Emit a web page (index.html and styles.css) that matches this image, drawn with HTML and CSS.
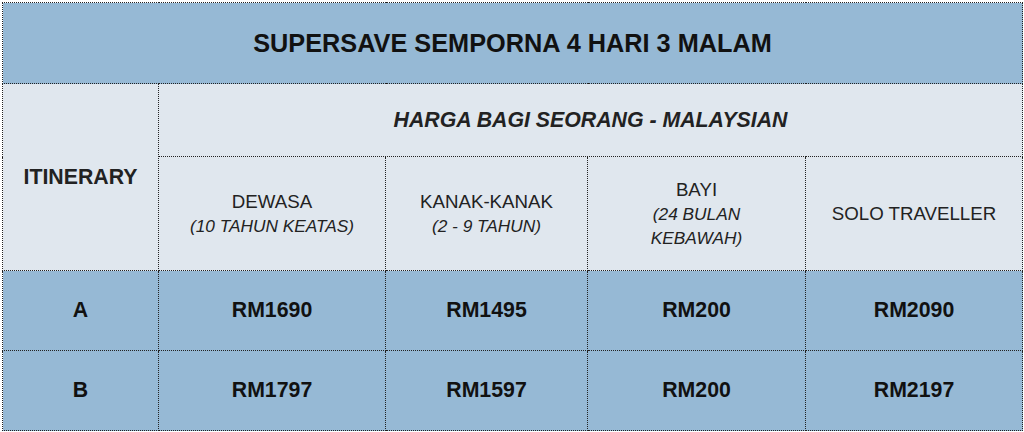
FILE: index.html
```html
<!DOCTYPE html>
<html>
<head>
<meta charset="utf-8">
<link rel="stylesheet" href="styles.css">
</head>
<body>
<table class="price">
  <colgroup>
    <col class="c1"><col class="c2"><col class="c3"><col class="c4"><col class="c5">
  </colgroup>
  <tr class="r-title">
    <td colspan="5" class="title">SUPERSAVE SEMPORNA 4 HARI 3 MALAM</td>
  </tr>
  <tr class="r-sub">
    <td rowspan="2" class="light itin">ITINERARY</td>
    <td colspan="4" class="light harga">HARGA BAGI SEORANG - MALAYSIAN</td>
  </tr>
  <tr class="r-cat">
    <td class="light cat">DEWASA<br><em>(10 TAHUN KEATAS)</em></td>
    <td class="light cat">KANAK-KANAK<br><em>(2 - 9 TAHUN)</em></td>
    <td class="light cat">BAYI<br><em>(24 BULAN<br>KEBAWAH)</em></td>
    <td class="light cat">SOLO TRAVELLER</td>
  </tr>
  <tr class="r-row">
    <td class="val">A</td>
    <td class="val">RM1690</td>
    <td class="val">RM1495</td>
    <td class="val">RM200</td>
    <td class="val">RM2090</td>
  </tr>
  <tr class="r-row">
    <td class="val">B</td>
    <td class="val">RM1797</td>
    <td class="val">RM1597</td>
    <td class="val">RM200</td>
    <td class="val">RM2197</td>
  </tr>
</table>
</body>
</html>
```

FILE: styles.css
```css
html, body {
  margin: 0;
  padding: 0;
  background: #ffffff;
}
body {
  padding: 2px 0 0 2px;
  font-family: "Liberation Sans", Arial, sans-serif;
}
.price {
  border-collapse: collapse;
  table-layout: fixed;
  width: 1020px;
}
.c1 { width: 156px; }
.c2 { width: 227px; }
.c3 { width: 202px; }
.c4 { width: 218px; }
.c5 { width: 217px; }
.price td {
  border: 1px dotted #222;
  text-align: center;
  vertical-align: middle;
  padding: 0 4px;
  background: #96b9d5;
  color: #111;
}
.price td.light {
  background: #e0e7ee;
  color: #222;
}
.r-title { height: 81px; }
.r-sub { height: 73px; }
.r-cat { height: 114px; }
.r-row { height: 80px; }
.title {
  font-size: 25.3px;
  font-weight: bold;
  color: #111;
}
.itin {
  font-size: 21.3px;
  font-weight: bold;
}
.harga {
  font-size: 21.3px;
  font-weight: bold;
  font-style: italic;
}
.cat {
  font-size: 18.7px;
  line-height: 24px;
}
.cat em {
  font-size: 17.3px;
  font-style: italic;
}
.val {
  font-size: 21.3px;
  font-weight: bold;
}
```
